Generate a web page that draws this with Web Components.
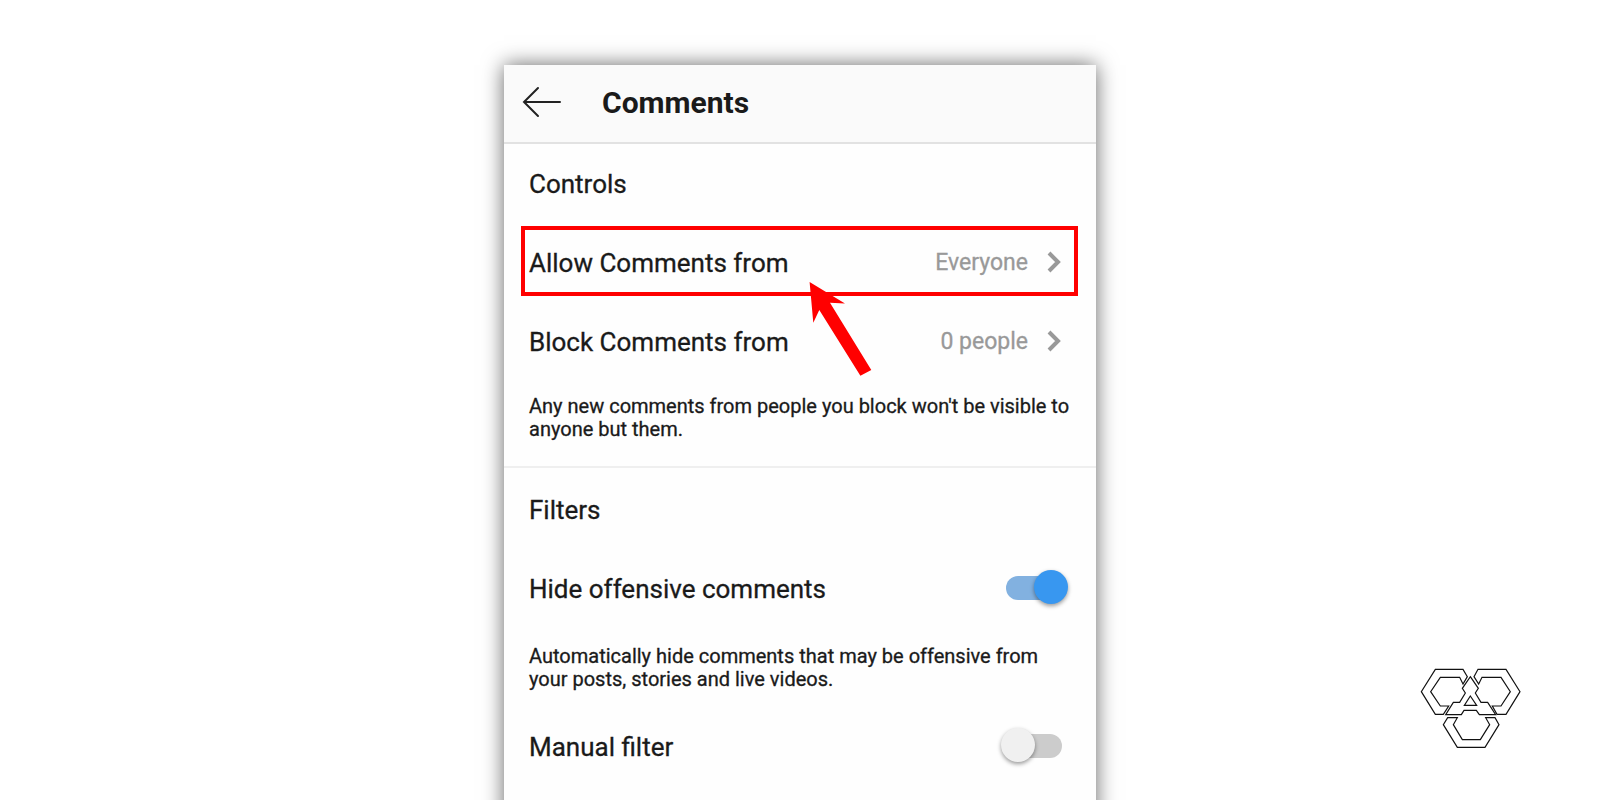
<!DOCTYPE html>
<html lang="en">
<head>
<meta charset="utf-8">
<title>Comments</title>
<style>
  html, body { margin: 0; background: #fff; }
  body { font-family: Roboto, "Liberation Sans", sans-serif; color: #1a1a1a; -webkit-text-stroke: 0.3px; }
</style>
</head>
<body>
<app-stage>
  <settings-card>
    <app-bar slot="header">Comments</app-bar>
    <settings-section heading="Controls" style="--note-top:14px;--note-bottom:25px">
      <link-row value="Everyone" highlighted>Allow Comments from</link-row>
      <link-row value="0 people">Block Comments from</link-row>
      <help-note>Any new comments from people you block won't be visible to anyone but them.</help-note>
    </settings-section>
    <settings-section heading="Filters" style="--section-top:2px;--note-top:17px;--note-bottom:16px">
      <switch-row checked>Hide offensive comments</switch-row>
      <help-note>Automatically hide comments that may be offensive from your posts, stories and live videos.</help-note>
      <switch-row>Manual filter</switch-row>
    </settings-section>
  </settings-card>
  <brand-mark slot="mark"></brand-mark>
</app-stage>
<script>
const define = (name, render) => customElements.define(name, class extends HTMLElement {
  constructor() {
    super();
    this.attachShadow({ mode: 'open' }).innerHTML = render(this);
  }
});

define('app-stage', () => `
  <style>
    :host { display: block; }
    main { position: relative; box-sizing: border-box; display: flex; justify-content: center; height: 100vh; padding-top: 65px; overflow: hidden; }
  </style>
  <main><slot></slot><slot name="mark"></slot></main>`);

define('settings-card', () => `
  <style>
    :host { display: block; flex: 0 1 592px; align-self: stretch; margin-bottom: -40px; background: #fefefe; box-shadow: 0 0 20px rgba(0,0,0,.6); }
  </style>
  <slot name="header"></slot><slot></slot>`);

define('app-bar', () => `
  <style>
    :host { display: block; }
    header { display: flex; align-items: center; gap: 38px; height: 75px; padding: 0 18px 2px; background: #fafafa; border-bottom: 2px solid #e2e2e2; }
    button { display: block; margin: 0; padding: 0; border: 0; background: none; color: inherit; }
    svg { display: block; }
    h1 { margin: 0; font-size: 30px; line-height: 36px; font-weight: 700; -webkit-text-stroke: 0; }
  </style>
  <header>
    <button type="button" aria-label="Back">
      <svg width="42" height="36" viewBox="0 0 42 36" fill="none" stroke="#222" stroke-width="2" stroke-linecap="round"><path d="M2 17H38M16 3L2 17L16 31"/></svg>
    </button>
    <h1><slot></slot></h1>
  </header>`);

define('settings-section', el => `
  <style>
    :host { display: block; padding-top: var(--section-top, 0); }
    :host(:not(:last-of-type)) { border-bottom: 2px solid #efefef; }
    h2 { margin: 0; padding: 0 25px; font-size: 26px; line-height: 80px; height: 79px; font-weight: 400; }
  </style>
  <h2>${el.getAttribute('heading')}</h2><slot></slot>`);

define('link-row', el => `
  <style>
    :host { display: block; position: relative; }
    a { display: flex; align-items: center; height: 79px; padding: 0 34px 0 25px; font-size: 26px; color: inherit; text-decoration: none; }
    .label { flex: 1; }
    .value { font-size: 23px; color: #999; margin-right: 18px; }
    a svg { display: block; margin-bottom: 2px; }
    .frame { position: absolute; inset: 3px 18px 6px 17px; border: 4px solid #f00; pointer-events: none; }
    .pointer { position: absolute; left: 305px; top: 59px; z-index: 1; pointer-events: none; }
  </style>
  <a href="#">
    <span class="label"><slot></slot></span>
    <span class="value">${el.getAttribute('value')}</span>
    <svg width="16" height="24" viewBox="0 0 16 24" fill="none" stroke="#999" stroke-width="4"><path d="M3 3L12 12L3 21"/></svg>
  </a>
  ${el.hasAttribute('highlighted') ? `
  <div class="frame"></div>
  <svg class="pointer" width="64" height="96" viewBox="0 0 64 96" fill="#f00"><path d="M.6 0L36 21.6L21 20.7L62.3 88L51.4 93.7L10.3 28L4.3 40.7Z"/></svg>` : ''}`);

define('help-note', () => `
  <style>
    :host { display: block; padding: var(--note-top) 20px var(--note-bottom) 25px; font-size: 20px; line-height: 23px; }
    p { margin: 0; }
  </style>
  <p><slot></slot></p>`);

define('switch-row', el => `
  <style>
    :host { display: block; }
    label { display: flex; align-items: center; justify-content: space-between; height: 79px; padding: 0 34px 0 25px; font-size: 26px; }
    input { appearance: none; position: relative; width: 56px; height: 24px; margin: 0 0 2px; border-radius: 12px; background: #ccc; }
    input::before { content: ""; position: absolute; left: -5px; top: -6px; width: 34px; height: 34px; border-radius: 50%; background: #f0f0f0; box-shadow: 0 2px 4px rgba(0,0,0,.4); }
    input:checked { background: #82b1e0; }
    input:checked::before { left: 28px; background: #3897f0; }
  </style>
  <label><slot></slot><input type="checkbox" role="switch" ${el.hasAttribute('checked') ? 'checked' : ''}></label>`);

define('brand-mark', () => `
  <style>
    :host { display: block; position: absolute; right: 60px; bottom: 40px; }
    svg { display: block; }
  </style>
  <svg width="140" height="110" viewBox="0 0 420 330" fill="none" stroke="#111" stroke-width="3.5" role="img" aria-label="Logo">
    <path d="M106 58H189L202 80L189 102L179 82H121L92 125L121 168H146L130 193H106L64 125Z"/>
    <path d="M234 58H318L360 125L318 193H291L277 168H303L331 125L303 82H246L236 102L222 80Z"/>
    <path d="M211 80L235 115L226 129L243 157H263L287 194H238L229 181H192L184 194H137L160 157H179L196 129L187 115Z"/>
    <path d="M211 138L230 166H193Z"/>
    <path d="M143 203H172L160 224L187 269H241L269 224L257 203H285L297 224L255 292H172L130 224Z"/>
  </svg>`);
</script>
</body>
</html>
